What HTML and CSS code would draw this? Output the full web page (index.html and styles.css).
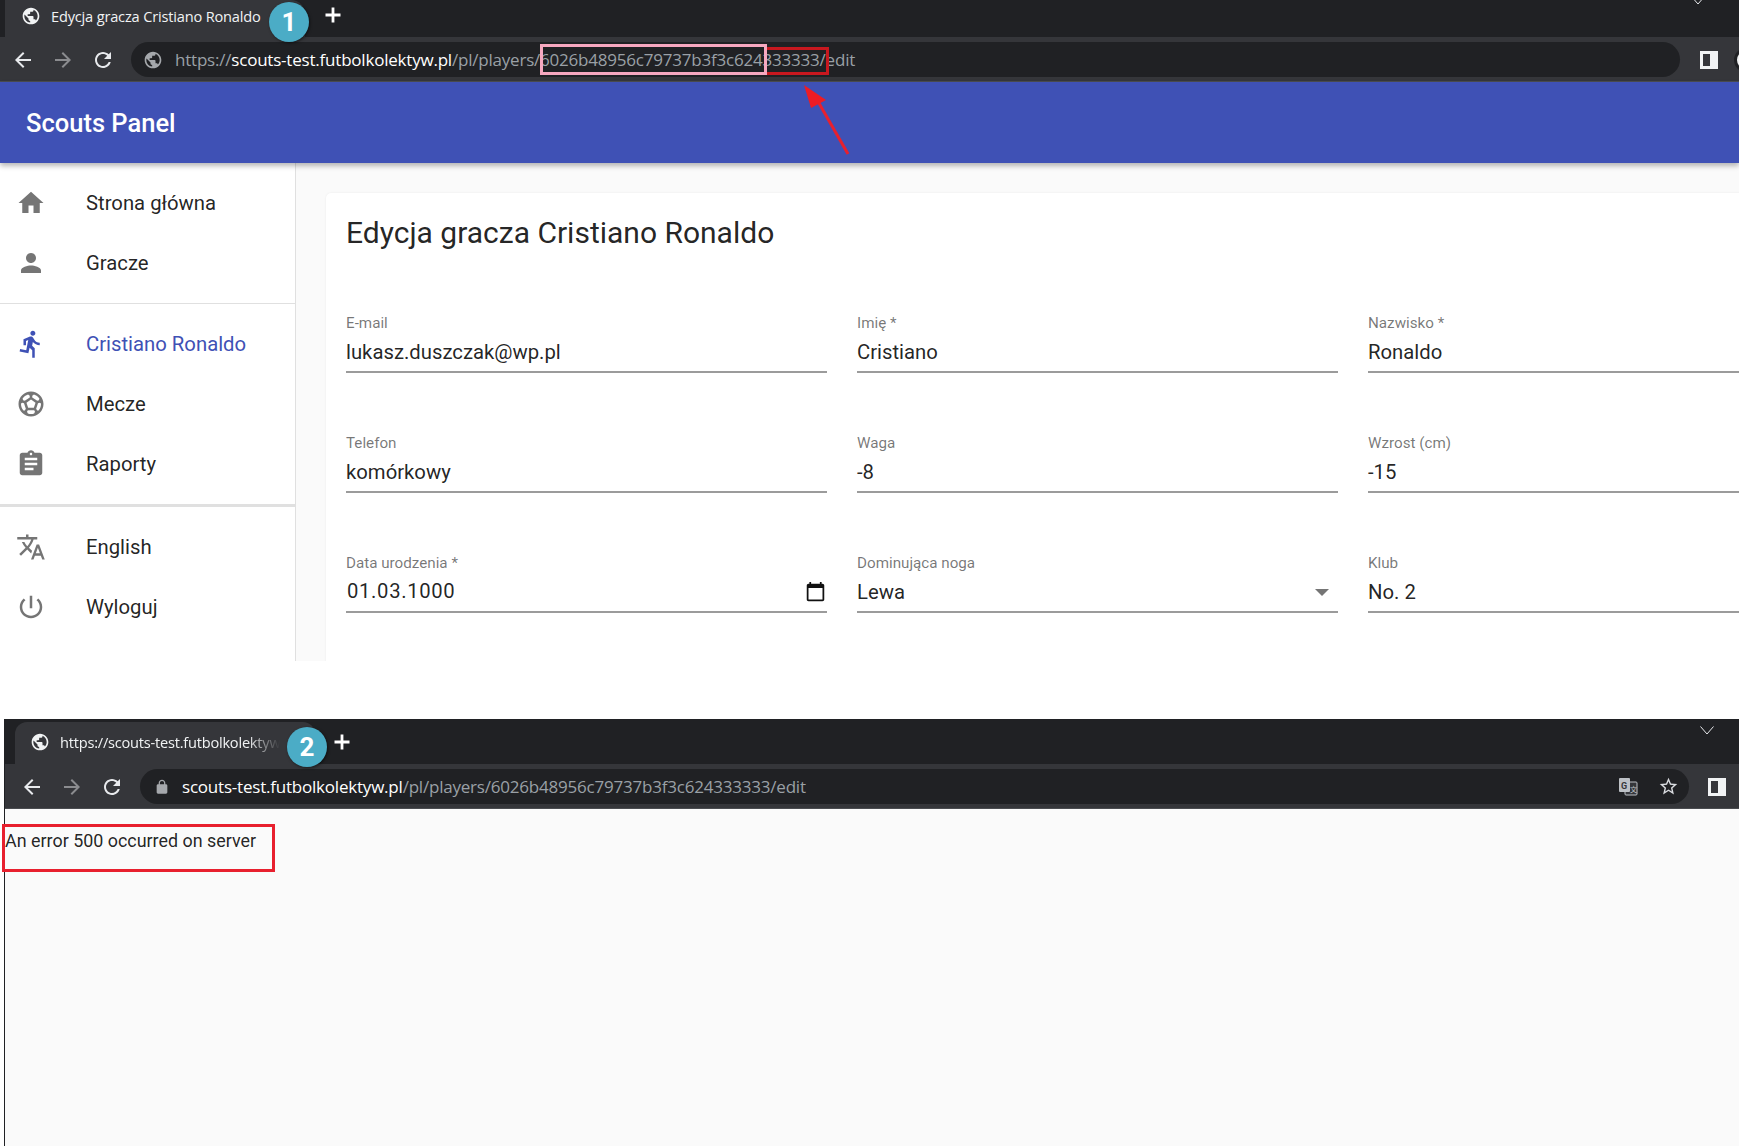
FILE: index.html
```html
<!DOCTYPE html>
<html lang="pl">
<head>
    <meta charset="UTF-8">
    <meta name="viewport" content="width=device-width, initial-scale=1.0">
    <link rel="stylesheet" href="styles.css">
    <title>Scouts Panel</title>
</head>
<body>
    <svg class="sprite" xmlns="http://www.w3.org/2000/svg">
        <symbol id="i-globe" viewBox="0 0 24 24"><path d="M12 2C6.48 2 2 6.48 2 12s4.48 10 10 10 10-4.48 10-10S17.52 2 12 2zm-1 17.93c-3.95-.49-7-3.85-7-7.93 0-.62.08-1.21.21-1.79L9 15v1c0 1.1.9 2 2 2v1.93zm6.9-2.54c-.26-.81-1-1.39-1.9-1.39h-1v-3c0-.55-.45-1-1-1H8v-2h2c.55 0 1-.45 1-1V7h2c1.1 0 2-.9 2-2v-.41c2.93 1.19 5 4.06 5 7.41 0 2.08-.8 3.97-2.1 5.39z"/></symbol>
        <symbol id="i-plus" viewBox="0 0 24 24"><path d="M19.5 13.4h-6.1v6.1h-2.8v-6.1H4.500v-2.800h6.100V4.500h2.800v6.100h6.100z"/></symbol>
        <symbol id="i-chevron" viewBox="0 0 14 9"><path d="M.5.5L7 8 13.5.5" fill="none" stroke="currentColor"/></symbol>
        <symbol id="i-back" viewBox="0 0 24 24"><path d="M20 11H7.83l5.59-5.59L12 4l-8 8 8 8 1.41-1.41L7.83 13H20v-2z"/></symbol>
        <symbol id="i-forward" viewBox="0 0 24 24"><path d="M4 11h12.17l-5.59-5.59L12 4l8 8-8 8-1.41-1.41L16.17 13H4v-2z"/></symbol>
        <symbol id="i-reload" viewBox="0 0 24 24"><path d="M17.65 6.35C16.2 4.9 14.21 4 12 4c-4.42 0-7.99 3.58-7.99 8s3.57 8 7.99 8c3.73 0 6.84-2.55 7.73-6h-2.08c-.82 2.33-3.04 4-5.65 4-3.31 0-6-2.69-6-6s2.69-6 6-6c1.66 0 3.14.69 4.22 1.78L13 11h7V4l-2.35 2.35z"/></symbol>
        <symbol id="i-lock" viewBox="0 0 24 24"><path d="M18 8h-1V6c0-2.76-2.24-5-5-5S7 3.24 7 6v2H6c-1.1 0-2 .9-2 2v10c0 1.1.9 2 2 2h12c1.1 0 2-.9 2-2V10c0-1.1-.9-2-2-2zM15.1 8H8.9V6c0-1.71 1.39-3.1 3.1-3.1 1.71 0 3.1 1.39 3.1 3.1v2z"/></symbol>
        <symbol id="i-star" viewBox="0 0 24 24"><path d="M22 9.24l-7.19-.62L12 2 9.19 8.63 2 9.24l5.46 4.73L5.82 21 12 17.27 18.18 21l-1.63-7.03L22 9.24zM12 15.4l-3.76 2.27 1-4.28-3.32-2.88 4.38-.38L12 6.1l1.71 4.04 4.38.38-3.32 2.88 1 4.28L12 15.4z"/></symbol>
        <symbol id="i-home" viewBox="0 0 24 24"><path d="M10 20v-6h4v6h5v-8h3L12 3 2 12h3v8z"/></symbol>
        <symbol id="i-person" viewBox="0 0 24 24"><path d="M12 12c2.21 0 4-1.79 4-4s-1.79-4-4-4-4 1.79-4 4 1.79 4 4 4zm0 2c-2.67 0-8 1.34-8 4v2h16v-2c0-2.66-5.33-4-8-4z"/></symbol>
        <symbol id="i-run" viewBox="0 0 24 24"><path d="M13.49 5.48c1.1 0 2-.9 2-2s-.9-2-2-2-2 .9-2 2 .9 2 2 2zm-3.6 13.9l1-4.4 2.1 2v6h2v-7.5l-2.1-2 .6-3c1.3 1.5 3.3 2.5 5.5 2.5v-2c-1.9 0-3.5-1-4.3-2.4l-1-1.6c-.4-.6-1-1-1.7-1-.3 0-.5.1-.8.1l-5.2 2.2v4.7h2v-3.4l1.8-.7-1.6 8.1-4.9-1-.4 2 7 1.4z"/></symbol>
        <symbol id="i-soccer" viewBox="0 0 24 24"><path d="M12 2C6.48 2 2 6.48 2 12s4.48 10 10 10 10-4.48 10-10S17.52 2 12 2zm1 3.3l1.35-.95c1.82.56 3.37 1.76 4.38 3.34l-.39 1.34-1.35.46L13 6.7V5.3zm-3.35-.95L11 5.3v1.4L7.01 9.49l-1.35-.46-.39-1.34c1.01-1.57 2.56-2.77 4.38-3.34zM7.08 17.11l-1.14.1C4.73 15.81 4 13.99 4 12c0-.12.01-.23.02-.35l1-.73 1.38.48 1.46 4.34-.78 1.37zm7.42 2.48c-.79.26-1.63.41-2.5.41s-1.71-.15-2.5-.41l-.69-1.49.64-1.1h5.11l.64 1.11-.7 1.48zM14.27 15H9.73l-1.35-4.02L12 8.44l3.63 2.54L14.27 15zm3.79 2.21l-1.14-.1-.79-1.37 1.46-4.34 1.39-.47 1 .73c.01.11.02.22.02.34 0 1.99-.73 3.81-1.94 5.21z"/></symbol>
        <symbol id="i-report" viewBox="0 0 24 24"><path d="M19 3h-4.18C14.4 1.84 13.3 1 12 1c-1.3 0-2.4.84-2.82 2H5c-1.1 0-2 .9-2 2v14c0 1.1.9 2 2 2h14c1.1 0 2-.9 2-2V5c0-1.1-.9-2-2-2zm-7 0c.55 0 1 .45 1 1s-.45 1-1 1-1-.45-1-1 .45-1 1-1zm2 14H7v-2h7v2zm3-4H7v-2h10v2zm0-4H7V7h10v2z"/></symbol>
        <symbol id="i-translate" viewBox="0 0 24 24"><path d="M12.87 15.07l-2.54-2.51.03-.03c1.74-1.94 2.98-4.17 3.71-6.53H17V4h-7V2H8v2H1v1.99h11.17C11.5 7.92 10.44 9.75 9 11.35 8.07 10.32 7.3 9.19 6.69 8h-2c.73 1.63 1.73 3.17 2.98 4.56l-5.09 5.02L4 19l5-5 3.11 3.11.76-2.04zM18.5 10h-2L12 22h2l1.12-3h4.75L21 22h2l-4.5-12zm-2.62 7l1.62-4.33L19.12 17h-3.24z"/></symbol>
        <symbol id="i-power" viewBox="0 0 24 24"><path d="M13 3h-2v10h2V3zm4.83 2.17l-1.42 1.42C17.99 7.86 19 9.81 19 12c0 3.87-3.13 7-7 7s-7-3.13-7-7c0-2.19 1.01-4.14 2.58-5.42L6.17 5.17C4.23 6.82 3 9.26 3 12c0 4.97 4.03 9 9 9s9-4.03 9-9c0-2.74-1.23-5.18-3.17-6.83z"/></symbol>
        <symbol id="i-calendar" viewBox="0 0 24 24"><path d="M20 3h-1V1h-2v2H7V1H5v2H4c-1.1 0-2 .9-2 2v16c0 1.1.9 2 2 2h16c1.1 0 2-.9 2-2V5c0-1.1-.9-2-2-2zm0 18H4V8h16v13z"/></symbol>
    </svg>

    <!-- first screenshot: player edit form -->
    <section class="shot shot-form">
        <div class="tabstrip">
            <div class="tab">
                <svg class="tab-icon"><use href="#i-globe"/></svg>
                <span class="tab-title">Edycja gracza Cristiano Ronaldo</span>
            </div>
            <svg class="new-tab"><use href="#i-plus"/></svg>
            <svg class="tabs-menu"><use href="#i-chevron"/></svg>
        </div>
        <div class="toolbar">
            <span class="nav-btn"><svg><use href="#i-back"/></svg></span>
            <span class="nav-btn dim"><svg><use href="#i-forward"/></svg></span>
            <span class="nav-btn"><svg><use href="#i-reload"/></svg></span>
            <div class="omnibox">
                <svg class="site-icon"><use href="#i-globe"/></svg>
                <span class="url">https://<b>scouts-test.futbolkolektyw.pl</b>/pl/players/6026b48956c79737b3f3c624333333/edit</span>
            </div>
            <span class="side-panel"></span>
            <span class="profile"></span>
        </div>

        <header class="appbar">Scouts Panel</header>
        <div class="app-body">
            <nav class="sidebar">
                <ul class="menu menu-top">
                    <li><svg><use href="#i-home"/></svg>Strona główna</li>
                    <li><svg><use href="#i-person"/></svg>Gracze</li>
                </ul>
                <ul class="menu menu-mid">
                    <li class="active"><svg><use href="#i-run"/></svg>Cristiano Ronaldo</li>
                    <li><svg><use href="#i-soccer"/></svg>Mecze</li>
                    <li><svg><use href="#i-report"/></svg>Raporty</li>
                </ul>
                <ul class="menu menu-bottom">
                    <li><svg><use href="#i-translate"/></svg>English</li>
                    <li><svg><use href="#i-power"/></svg>Wyloguj</li>
                </ul>
            </nav>
            <main class="content">
                <div class="card">
                    <h1>Edycja gracza Cristiano Ronaldo</h1>
                    <div class="fields">
                        <div class="field"><label>E-mail</label><div class="value">lukasz.duszczak@wp.pl</div></div>
                        <div class="field"><label>Imię *</label><div class="value">Cristiano</div></div>
                        <div class="field"><label>Nazwisko *</label><div class="value">Ronaldo</div></div>
                        <div class="field"><label>Telefon</label><div class="value">komórkowy</div></div>
                        <div class="field"><label>Waga</label><div class="value">-8</div></div>
                        <div class="field"><label>Wzrost (cm)</label><div class="value">-15</div></div>
                        <div class="field"><label>Data urodzenia *</label><div class="value date">01.03.1000<svg><use href="#i-calendar"/></svg></div></div>
                        <div class="field"><label>Dominująca noga</label><div class="value select">Lewa<span class="caret"></span></div></div>
                        <div class="field"><label>Klub</label><div class="value">No. 2</div></div>
                    </div>
                </div>
            </main>
        </div>

        <span class="badge badge-one">1</span>
        <span class="mark mark-pink"></span>
        <span class="mark mark-red"></span>
        <svg class="arrow" viewBox="0 0 60 80"><path d="M48 74L16 18" stroke="#e8202e" stroke-width="3" fill="none"/><path d="M4 5L26 20 11 28z" fill="#ed1c24"/></svg>
    </section>

    <!-- second screenshot: server error -->
    <section class="shot shot-error">
        <div class="tabstrip">
            <div class="tab">
                <svg class="tab-icon"><use href="#i-globe"/></svg>
                <span class="tab-title fade">https://scouts-test.futbolkolektyw</span>
            </div>
            <svg class="new-tab"><use href="#i-plus"/></svg>
            <svg class="tabs-menu"><use href="#i-chevron"/></svg>
        </div>
        <div class="toolbar">
            <span class="nav-btn"><svg><use href="#i-back"/></svg></span>
            <span class="nav-btn dim"><svg><use href="#i-forward"/></svg></span>
            <span class="nav-btn"><svg><use href="#i-reload"/></svg></span>
            <div class="omnibox">
                <svg class="site-icon lock"><use href="#i-lock"/></svg>
                <span class="url"><b>scouts-test.futbolkolektyw.pl</b>/pl/players/6026b48956c79737b3f3c624333333/edit</span>
                <svg class="translate" viewBox="0 0 20 20">
                    <rect x="7" y="5" width="12" height="13" rx="1" fill="#35363a" stroke="#bdc1c6"/>
                    <rect x="1" y="1" width="11" height="14" rx="1" fill="#bdc1c6"/>
                    <text x="3" y="12" class="translate-g">G</text>
                    <text x="12" y="15" class="translate-k">文</text>
                </svg>
                <svg class="star"><use href="#i-star"/></svg>
            </div>
            <span class="side-panel"></span>
        </div>
        <div class="error-page">An error 500 occurred on server</div>

        <span class="badge badge-two">2</span>
        <span class="mark mark-error"></span>
    </section>
</body>
</html>
```

FILE: styles.css
```css
* {
    box-sizing: border-box;
}

html, body {
    margin: 0;
    height: 100%;
    overflow: hidden;
}

body {
    width: 1739px;
    height: 1146px;
    background-color: #fff;
    font-family: Roboto, sans-serif;
    color: rgba(0, 0, 0, 0.87);
}

.sprite {
    display: none;
}

.shot {
    position: relative;
}

.shot-form {
    height: 661px;
    overflow: hidden;
}

.shot-error {
    height: 427px;
    margin: 58px 0 0 4px;
    border-left: 1px solid #202124;
}

/* browser chrome */
.tabstrip {
    display: flex;
    height: 37px;
    padding-left: 5px;
    background-color: #202124;
    color: #e8eaed;
}

.shot-error .tabstrip {
    height: 45px;
    padding: 3px 0 0 10px;
}

.tab {
    display: flex;
    align-items: center;
    width: 300px;
    padding: 0 0 6px 16px;
    background-color: #35363a;
    border-radius: 0 14px 0 0;
}

.shot-error .tab {
    border-radius: 12px 12px 0 0;
    padding: 0 0 3px 15px;
}

.tab-icon {
    width: 20px;
    height: 20px;
    margin-right: 10px;
    fill: #f1f3f4;
}

.tab-title {
    font-family: "Open Sans", sans-serif;
    font-size: 14.6px;
    letter-spacing: -0.18px;
    color: #f1f3f4;
    white-space: nowrap;
}

.tab-title.fade {
    letter-spacing: -0.22px;
    -webkit-mask-image: linear-gradient(to right, #000 85%, transparent);
    mask-image: linear-gradient(to right, #000 85%, transparent);
}

.new-tab {
    width: 24px;
    height: 24px;
    margin: 3px 0 0 16px;
    fill: #fff;
}

.shot-error .new-tab {
    margin: 8px 0 0 15px;
}

.tabs-menu {
    width: 14px;
    height: 9px;
    margin: -4px 34px 0 auto;
    color: #e8eaed;
}

.shot-error .tabs-menu {
    margin: 4px 25px 0 auto;
}

.toolbar {
    display: flex;
    align-items: center;
    height: 45px;
    padding: 1px 0 0 3px;
    background-color: #35363a;
    border-bottom: 1px solid #4a4c50;
}

.shot-error .toolbar {
    padding-left: 7px;
}

.nav-btn {
    display: flex;
    flex: none;
    justify-content: center;
    width: 40px;
    fill: #e8eaed;
}

.nav-btn.dim {
    fill: #8b8c8f;
}

.nav-btn svg {
    width: 24px;
    height: 24px;
}

.omnibox {
    display: flex;
    flex: none;
    align-items: center;
    width: 1549px;
    height: 35px;
    margin-left: 8px;
    padding: 0 10px 0 12px;
    background-color: #202124;
    border-radius: 18px;
}

.site-icon {
    flex: none;
    width: 20px;
    height: 20px;
    margin-right: 12px;
    fill: #a5a8ac;
}

.site-icon.lock {
    margin-right: 10px;
    transform: scale(0.8);
}

.url {
    font-family: "Open Sans", sans-serif;
    font-size: 17px;
    letter-spacing: -0.21px;
    color: #9aa0a6;
    white-space: nowrap;
}

.url b {
    font-weight: 400;
    color: #fff;
}

.translate {
    width: 20px;
    height: 20px;
    margin-left: auto;
}

.translate-g {
    font-family: Roboto, sans-serif;
    font-size: 9px;
    font-weight: 700;
    fill: #35363a;
}

.translate-k {
    font-family: "Noto Sans CJK SC", sans-serif;
    font-size: 7px;
    fill: #bdc1c6;
}

.star {
    width: 21px;
    height: 21px;
    margin: 0 0 0 20px;
    fill: #dadce0;
}

.side-panel {
    flex: none;
    width: 18px;
    height: 18px;
    margin-left: 20px;
    background-color: #f1f3f4;
    border: 3px solid #f1f3f4;
    border-right-width: 8px;
    box-shadow: inset 0 0 0 10px #35363a;
}

.shot-error .side-panel {
    margin-left: 19px;
}

.profile {
    flex: none;
    width: 24px;
    height: 24px;
    margin-left: 16px;
    background-color: #f1f3f4;
    border: 3px solid #202124;
    border-radius: 50%;
}

/* scouts panel */
.appbar {
    position: relative;
    z-index: 1;
    height: 81px;
    padding: 0 26px;
    line-height: 83px;
    font-size: 25.5px;
    font-weight: 500;
    color: #fff;
    background-color: #3f51b5;
    box-shadow: 0 3px 5px rgba(0, 0, 0, 0.28);
}

.app-body {
    display: flex;
    height: 498px;
}

.sidebar {
    flex: none;
    width: 296px;
    background-color: #fff;
    border-right: 1px solid #e0e0e0;
}

.menu {
    list-style: none;
    margin: 0;
    padding: 10px 0 10px;
}

.menu li {
    display: flex;
    align-items: center;
    height: 60px;
    padding-left: 16px;
    font-size: 20.3px;
}

.menu svg {
    flex: none;
    width: 30px;
    height: 30px;
    margin-right: 40px;
    fill: #757575;
}

.menu .active {
    color: #3f51b5;
}

.menu .active svg {
    fill: #3f51b5;
}

.menu-top {
    border-bottom: 1px solid #e0e0e0;
    height: 141px;
}

.menu-mid {
    border-bottom: 3px solid #e0e0e0;
    height: 203px;
}

.content {
    flex: 1;
    padding: 30px 0 0 30px;
    background-color: #fafafa;
    overflow: hidden;
}

.card {
    width: 1600px;
    height: 600px;
    padding: 18px 20px;
    background-color: #fff;
    border-radius: 5px;
    box-shadow: 0 0 2px rgba(0, 0, 0, 0.08);
}

h1 {
    margin: 0;
    font-size: 30px;
    font-weight: 400;
    line-height: 43px;
}

.fields {
    display: grid;
    grid-template-columns: repeat(3, 481px);
    column-gap: 30px;
    row-gap: 60px;
    margin-top: 59px;
}

.field label {
    display: block;
    font-size: 15.2px;
    line-height: 20px;
    color: rgba(0, 0, 0, 0.54);
}

.value {
    display: flex;
    align-items: center;
    height: 40px;
    padding-top: 5px;
    padding-bottom: 5px;
    font-size: 20.3px;
    line-height: 28px;
    border-bottom: 2px solid #9b9b9b;
}

.value.date {
    justify-content: space-between;
    padding-top: 4px;
    padding-bottom: 6px;
    padding-left: 1px;
    letter-spacing: 0.65px;
}

.value.date svg {
    width: 21px;
    height: 21px;
    margin-right: 1px;
    fill: #111;
}

.value.select {
    justify-content: space-between;
}

.caret {
    width: 0;
    height: 0;
    margin-right: 9px;
    border-left: 7px solid transparent;
    border-right: 7px solid transparent;
    border-top: 7px solid #757575;
}

.error-page {
    height: 337px;
    padding-top: 18px;
    background-color: #fafafa;
    font-size: 17.9px;
    line-height: 28px;
}

/* annotations drawn over the screenshots */
.badge {
    position: absolute;
    width: 40px;
    height: 40px;
    border-radius: 50%;
    background-color: #4bacc6;
    color: #fff;
    font-size: 26px;
    font-weight: 700;
    line-height: 40px;
    text-align: center;
    box-shadow: 1px 1px 3px rgba(0, 0, 0, 0.5);
}

.badge-one {
    left: 269px;
    top: 2px;
}

.badge-two {
    left: 282px;
    top: 8px;
}

.mark {
    position: absolute;
    border: 3px solid #ed1c24;
}

.mark-pink {
    left: 540px;
    top: 44px;
    width: 227px;
    height: 31px;
    border-color: #f7a8c0;
    z-index: 1;
}

.mark-red {
    left: 766px;
    top: 47px;
    width: 63px;
    height: 28px;
    border-left: none;
    border-color: #c8181f;
}

.mark-error {
    left: -3px;
    top: 105px;
    width: 273px;
    height: 48px;
    border-color: #e8202e;
}

.arrow {
    position: absolute;
    left: 800px;
    top: 80px;
    width: 60px;
    height: 80px;
    z-index: 2;
}
```
